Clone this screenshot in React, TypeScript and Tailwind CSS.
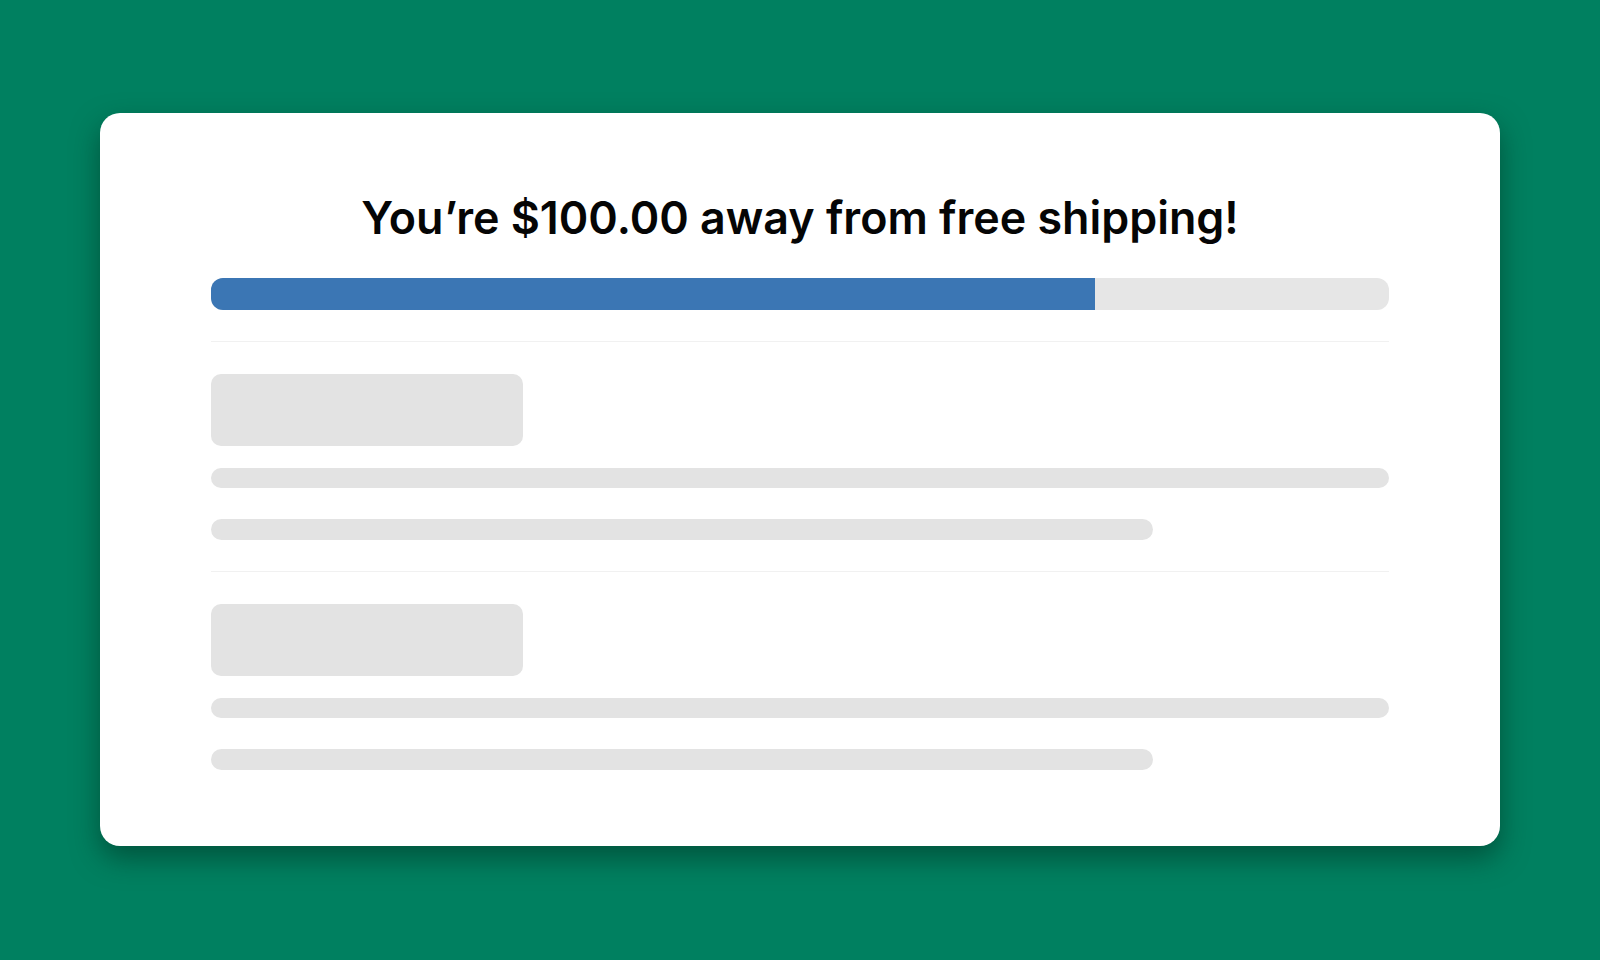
export default function App() {
  const Section = ({ last }: { last?: boolean }) => (
    <div className="flex flex-col">
      <div className="h-px bg-[#f1f1f1]" />
      <div className="mt-[32px] h-[72px] w-[312px] rounded-[10px] bg-[#e3e3e3] blur-[0.6px]" />
      <div className="mt-[22px] h-[20px] w-full rounded-full bg-[#e3e3e3] blur-[0.6px]" />
      <div className="mt-[31px] h-[21px] w-[80%] rounded-full bg-[#e3e3e3] blur-[0.6px]" />
      {!last && <div className="h-[31px]" />}
    </div>
  );
  return (
    <div className="w-[1600px] h-[960px] bg-[#008060] flex items-start justify-center pt-[113px]" style={{ fontFamily: 'Inter, "Liberation Sans", sans-serif' }}>
      <div className="w-[1400px] h-[733px] bg-white rounded-[20px] shadow-[0_12px_28px_rgba(0,40,25,0.5)] px-[111px] pt-[83px]">
        <h1 className="text-center text-[44.8px] leading-none font-semibold text-[#050505]">
          You’re $100.00 away from free shipping!
        </h1>
        <div className="mt-[37px] h-[32px] w-full rounded-[12px] bg-[#e6e6e6] overflow-hidden blur-[0.4px]">
          <div className="h-full w-[75%] bg-[#3b76b4]" />
        </div>
        <div className="mt-[31px] flex flex-col">
          <Section />
          <Section last />
        </div>
      </div>
    </div>
  );
}
